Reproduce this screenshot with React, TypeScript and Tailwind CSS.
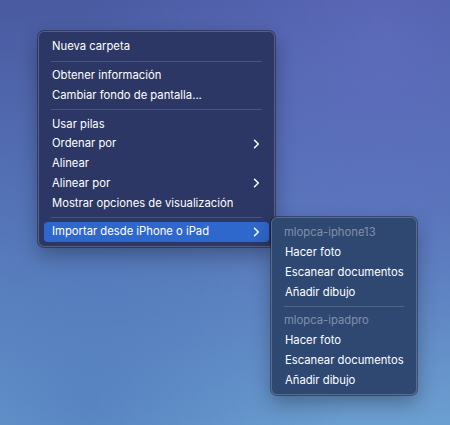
import React from "react";

type Item =
  | { kind: "item"; label: string; submenu?: boolean; active?: boolean }
  | { kind: "sep" }
  | { kind: "head"; label: string };

const MAIN: Item[] = [
  { kind: "item", label: "Nueva carpeta" },
  { kind: "sep" },
  { kind: "item", label: "Obtener información" },
  { kind: "item", label: "Cambiar fondo de pantalla..." },
  { kind: "sep" },
  { kind: "item", label: "Usar pilas" },
  { kind: "item", label: "Ordenar por", submenu: true },
  { kind: "item", label: "Alinear" },
  { kind: "item", label: "Alinear por", submenu: true },
  { kind: "item", label: "Mostrar opciones de visualización" },
  { kind: "sep" },
  { kind: "item", label: "Importar desde iPhone o iPad", submenu: true, active: true },
];

const SUB: Item[] = [
  { kind: "head", label: "mlopca-iphone13" },
  { kind: "item", label: "Hacer foto" },
  { kind: "item", label: "Escanear documentos" },
  { kind: "item", label: "Añadir dibujo" },
  { kind: "sep" },
  { kind: "head", label: "mlopca-ipadpro" },
  { kind: "item", label: "Hacer foto" },
  { kind: "item", label: "Escanear documentos" },
  { kind: "item", label: "Añadir dibujo" },
];

const Chevron: React.FC = () => (
  <svg width="7" height="10" viewBox="0 0 7 10" fill="none" className="shrink-0">
    <path d="M1.5 1.2 L5.3 5 L1.5 8.8" stroke="white" strokeWidth="1.5" strokeLinecap="round" strokeLinejoin="round" />
  </svg>
);

const MenuRows: React.FC<{ items: Item[] }> = ({ items }) => (
  <>
    {items.map((item, i) => {
      if (item.kind === "sep") {
        return (
          <div key={i} className="flex h-[9px] items-center px-[7px]">
            <div className="h-px w-full bg-white/15" />
          </div>
        );
      }
      if (item.kind === "head") {
        return (
          <div key={i} className="flex h-[19.75px] items-center whitespace-nowrap px-[7px] text-white/40">
            {item.label}
          </div>
        );
      }
      return (
        <div
          key={i}
          className={`flex h-[19.75px] items-center justify-between whitespace-nowrap rounded-[4px] pl-2 pr-[9px] text-white ${
            item.active ? "bg-[#2f68cc]" : ""
          }`}
        >
          <span>{item.label}</span>
          {item.submenu && <Chevron />}
        </div>
      );
    })}
  </>
);

const App: React.FC = () => {
  return (
    <div
      className="relative h-[425px] w-[450px] overflow-hidden bg-linear-to-b from-[#4a5aa1] via-[#5674b8] to-[#6c9fd1] text-[11.25px] leading-none"
      style={{ fontFamily: "Inter, 'Liberation Sans', sans-serif" }}
    >
      <div className="absolute inset-0 bg-[radial-gradient(ellipse_at_85%_10%,rgba(110,120,210,0.45),transparent_55%)]" />
      <div className="absolute inset-0 bg-[radial-gradient(ellipse_at_20%_95%,rgba(70,110,180,0.5),transparent_50%)]" />

      <div className="absolute left-[38px] top-[31px] flex w-[237px] flex-col rounded-[6px] border border-white/20 bg-[#2c3766] px-[5px] pb-1 pt-[5px] shadow-[0_0_0_1px_rgba(0,0,0,0.35),0_8px_20px_rgba(0,0,0,0.3)]">
        <MenuRows items={MAIN} />
      </div>

      <div className="absolute left-[271px] top-[217px] flex w-[146px] flex-col rounded-[6px] border border-white/20 bg-[#2e4872] px-[5px] pb-1 pt-[5px] shadow-[0_0_0_1px_rgba(0,0,0,0.35),0_8px_20px_rgba(0,0,0,0.3)]">
        <MenuRows items={SUB} />
      </div>
    </div>
  );
};

export default App;
